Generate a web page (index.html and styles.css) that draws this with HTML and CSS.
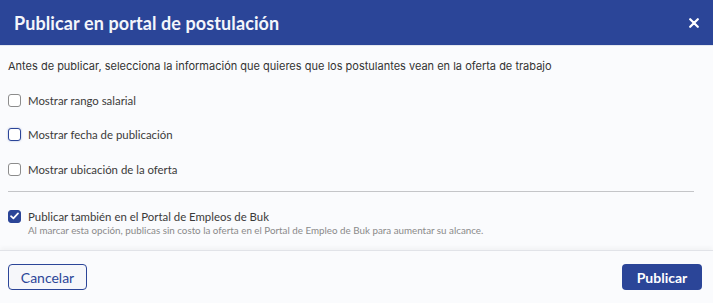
FILE: index.html
```html
<!DOCTYPE html>
<html lang="es">
<head>
<meta charset="utf-8">
<link rel="stylesheet" href="styles.css">
</head>
<body>
<div class="modal">
  <header class="modal-header">
    <h1 class="modal-title">Publicar en portal de postulación</h1>
    <button class="close" aria-label="Cerrar">
      <svg width="10" height="10" viewBox="0 0 10 10"><path d="M1.2 1.2 L8.8 8.8 M8.8 1.2 L1.2 8.8" stroke="#fff" stroke-width="2.2" stroke-linecap="round"/></svg>
    </button>
  </header>
  <div class="modal-body">
    <p class="intro">Antes de publicar, selecciona la información que quieres que los postulantes vean en la oferta de trabajo</p>
    <label class="option"><span class="box"></span><span class="label">Mostrar rango salarial</span></label>
    <label class="option"><span class="box focus"></span><span class="label">Mostrar fecha de publicación</span></label>
    <label class="option last"><span class="box"></span><span class="label">Mostrar ubicación de la oferta</span></label>
    <hr class="divider">
    <div class="option checked-opt">
      <span class="box checked"><svg width="9" height="8" viewBox="0 0 9 8"><path d="M1 4.2 L3.4 6.4 L8 1.4" stroke="#fff" stroke-width="1.7" fill="none" stroke-linecap="round" stroke-linejoin="round"/></svg></span>
      <div class="text">
        <span class="label">Publicar también en el Portal de Empleos de Buk</span>
        <span class="hint">Al marcar esta opción, publicas sin costo la oferta en el Portal de Empleo de Buk para aumentar su alcance.</span>
      </div>
    </div>
  </div>
  <footer class="modal-footer">
    <button class="btn btn-outline">Cancelar</button>
    <button class="btn btn-primary">Publicar</button>
  </footer>
</div>
</body>
</html>
```

FILE: styles.css
```css
* { box-sizing: border-box; }
html, body { margin: 0; padding: 0; }
body { width: 713px; height: 303px; background: #fafbfd; font-family: Lato, "Noto Sans", sans-serif; overflow: hidden; }
.modal { display: flex; flex-direction: column; height: 303px; }
.modal-header { height: 46px; background: #2b4598; border-bottom: 1px solid #e3e7ef; display: flex; align-items: center; justify-content: space-between; padding: 0 14px 0 14px; flex: none; }
.modal-title { margin: 0; font-family: Lato, sans-serif; font-weight: 700; font-size: 18px; color: #f4f6fb; letter-spacing: 0.1px; }
.close { background: none; border: 0; padding: 0; display: flex; }
.modal-body { padding: 12px 8px 0 8px; height: 204px; flex: none; }
.intro { margin: 0 0 18.5px 0; font-family: Inter, sans-serif; font-size: 11px; color: #333; line-height: 16px; }
.option { display: flex; align-items: center; gap: 7px; height: 15px; margin-bottom: 19.5px; }
.option.last { margin-bottom: 0; }
.label { font-size: 11.4px; color: #3a3a3a; line-height: 15px; }
.box { width: 13px; height: 13px; border: 1px solid #8c8c8c; border-radius: 3px; background: #fff; flex: none; display: flex; align-items: center; justify-content: center; }
.box.focus { border: 1.5px solid #2b4598; box-shadow: 0 0 2px rgba(43,69,152,0.4); }
.box.checked { background: #2b4598; border-color: #2b4598; }
.divider { border: 0; border-top: 1px solid #c4c5c8; margin: 14.5px 11px 16.5px 0; }
.checked-opt { align-items: flex-start; height: auto; margin: 0; }
.checked-opt .box { margin-top: 1px; }
.text { display: flex; flex-direction: column; }
.hint { font-size: 9.8px; color: #8a8a8a; line-height: 13px; }
.modal-footer { flex: 1; border-top: 1px solid #e1e3e8; box-shadow: 0 -3px 4px rgba(0,0,0,0.03); display: flex; justify-content: space-between; align-items: flex-start; padding: 13px 11px 0 8px; }
.btn { height: 26px; border-radius: 4px; font-family: Lato, sans-serif; font-size: 14px; padding: 0; }
.btn-outline { width: 79px; border: 1px solid #2b4598; background: #f6f7fa; color: #2b4598; }
.btn-primary { width: 80px; border: 0; background: #2b4598; color: #fff; font-weight: 700; }
```
